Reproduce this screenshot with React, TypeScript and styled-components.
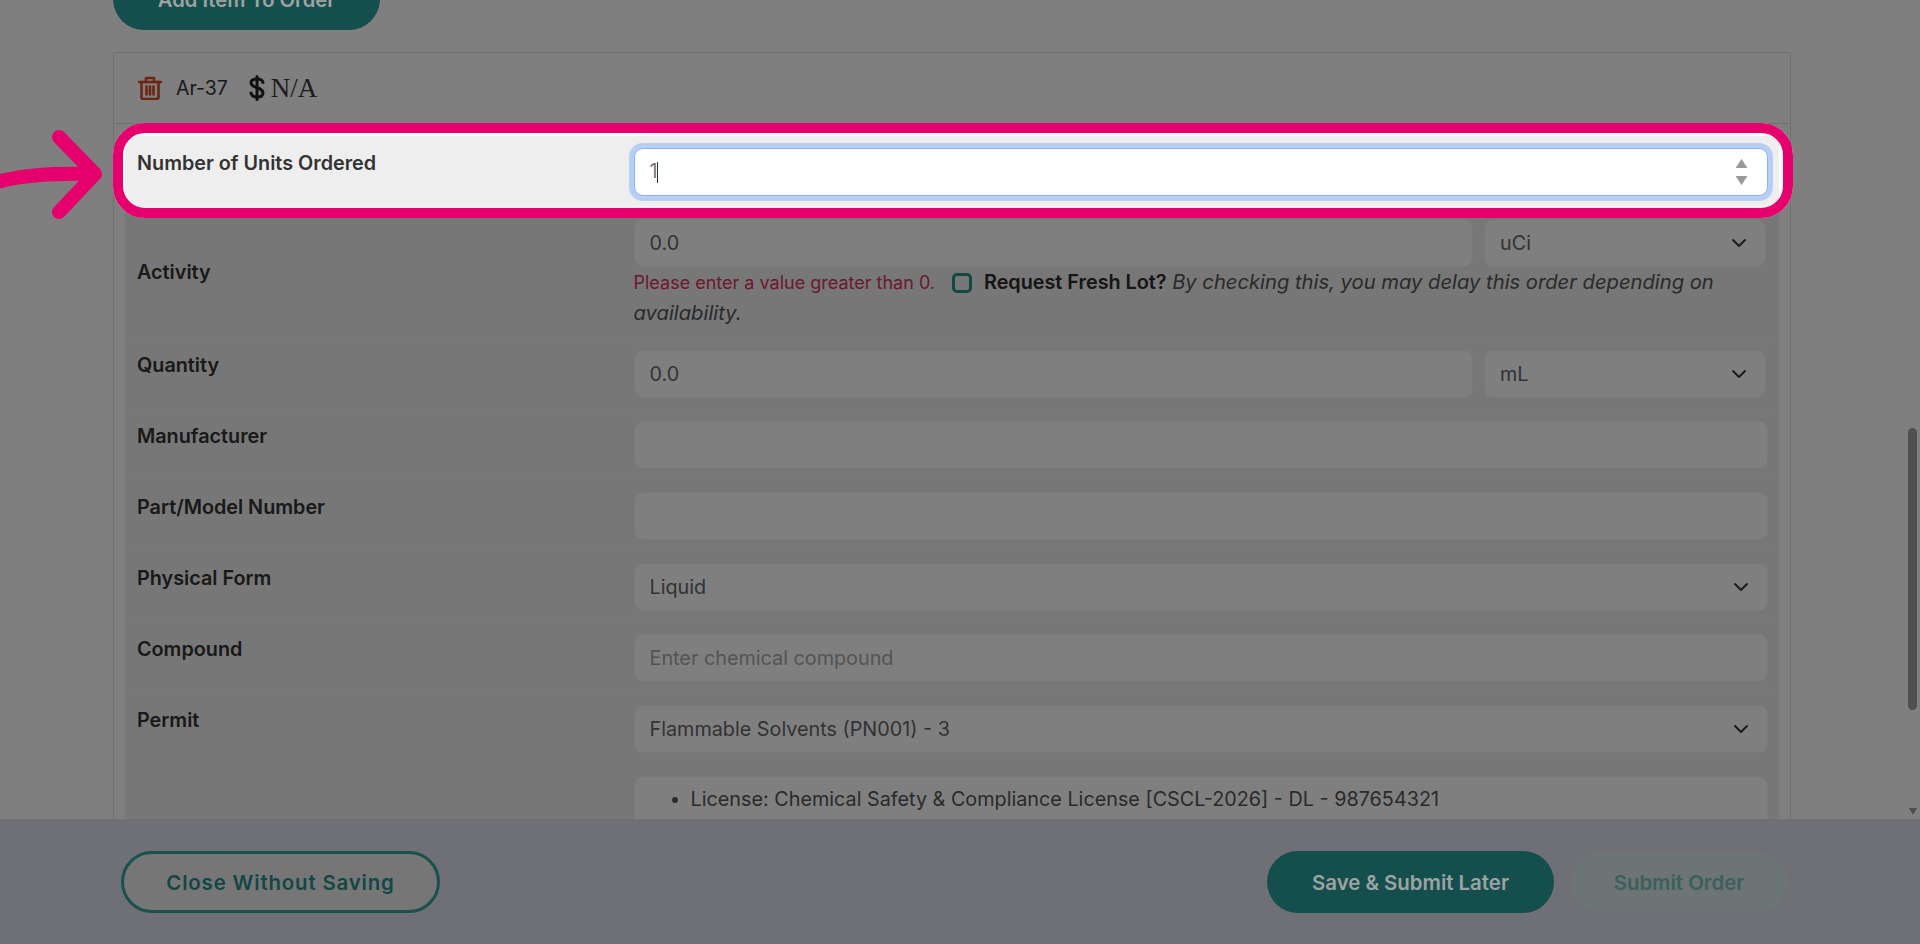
import React, { ReactNode } from 'react';
import styled, { createGlobalStyle } from 'styled-components';

const FONT = `Inter, "Noto Sans", sans-serif`;

const GlobalStyle = createGlobalStyle`
  html, body { margin: 0; padding: 0; background: #fff; }
  * { box-sizing: border-box; }
`;

const ChevronDown = () => (
  <svg width="16" height="16" viewBox="0 0 16 16" fill="none" stroke="#343a40" strokeWidth="2" strokeLinecap="round" strokeLinejoin="round">
    <path d="m2 5 6 6 6-6" />
  </svg>
);

const TrashIcon = () => (
  <svg width="24" height="24" viewBox="0 0 24 24" fill="none" stroke="#d84a22" strokeWidth="2.6" strokeLinejoin="round" strokeLinecap="round">
    <path d="M1 6h22" />
    <path d="M8 6V2h8v4" />
    <path d="M3.5 6v15a2 2 0 0 0 2 2h13a2 2 0 0 0 2-2V6" />
    <path d="M8.5 10.500v8M12 10.500v8M15.500 10.500v8" />
  </svg>
);

const DollarIcon = () => (
  <svg width="16" height="26" viewBox="0 0 16 26" fill="none" stroke="#202326" strokeWidth="3" strokeLinecap="round">
    <path d="M14 7.500C13.500 5 11 4 8 4 4.500 4 2 5.500 2 8c0 5.500 12 3.500 12 10 0 2.500-2.500 4-6 4-3.500 0-5.500-1.500-6-4" />
    <path d="M8 1.500v23" />
  </svg>
);

const SpinIcon = () => (
  <svg width="13" height="26" viewBox="0 0 13 26" fill="#9a9a9a">
    <path d="M6.500 0 12.500 9H.5z" />
    <path d="M.5 17h12l-6 9z" />
  </svg>
);

const ArrowIcon = () => (
  <svg width="112" height="100" viewBox="0 0 112 100" fill="none" stroke="#e5006e" strokeWidth="14" strokeLinecap="round" strokeLinejoin="round">
    <path d="M-6 60C20 52 50 50 92 51" />
    <path d="M59 14 95 51 59 89" />
  </svg>
);

const Row = ({ label, middle, children }: { label: string; middle?: boolean; children: ReactNode }) => (
  <RowWrap>
    <Label $middle={middle}>{label}</Label>
    <Cell>{children}</Cell>
  </RowWrap>
);

export default function App() {
  return (
    <Page>
      <GlobalStyle />
      <Main>
        <Content>
          <AddButton>Add Item To Order</AddButton>
          <Card>
            <CardHeader>
              <TrashIcon />
              <ItemName>Ar-37</ItemName>
              <Price>
                <DollarIcon />
                <PriceText>N/A</PriceText>
              </Price>
            </CardHeader>
            <Table>
              <Row label="Number of Units Ordered">
                <FocusField>
                  <Value>1</Value>
                  <Caret />
                  <Spin>
                    <SpinIcon />
                  </Spin>
                </FocusField>
              </Row>
              <Row label="Activity" middle>
                <Pair>
                  <Field>0.0</Field>
                  <Field>
                    uCi
                    <ChevronDown />
                  </Field>
                </Pair>
                <Helper>
                  <ErrorText>Please enter a value greater than 0.</ErrorText>
                  <CheckBox />
                  <strong>Request Fresh Lot?</strong>{' '}
                  <em>By checking this, you may delay this order depending on</em>
                  <br />
                  <em>availability.</em>
                </Helper>
              </Row>
              <Row label="Quantity">
                <Pair>
                  <Field>0.0</Field>
                  <Field>
                    mL
                    <ChevronDown />
                  </Field>
                </Pair>
              </Row>
              <Row label="Manufacturer">
                <Field />
              </Row>
              <Row label="Part/Model Number">
                <Field />
              </Row>
              <Row label="Physical Form">
                <Field>
                  Liquid
                  <ChevronDown />
                </Field>
              </Row>
              <Row label="Compound">
                <Field $placeholder>Enter chemical compound</Field>
              </Row>
              <Row label="Permit">
                <Field>
                  Flammable Solvents (PN001) - 3
                  <ChevronDown />
                </Field>
                <LicenseBox>
                  <ul>
                    <li>License: Chemical Safety &amp; Compliance License [CSCL-2026] - DL - 987654321</li>
                  </ul>
                </LicenseBox>
              </Row>
            </Table>
          </Card>
        </Content>
        <Scrollbar>
          <Thumb />
          <ScrollArrow />
        </Scrollbar>
      </Main>
      <Footer>
        <CloseButton>Close Without Saving</CloseButton>
        <FooterRight>
          <SaveButton>Save &amp; Submit Later</SaveButton>
          <SubmitButton>Submit Order</SubmitButton>
        </FooterRight>
      </Footer>
      <Highlight />
      <Arrow>
        <ArrowIcon />
      </Arrow>
    </Page>
  );
}

const Page = styled.div`
  position: relative;
  width: 1920px;
  height: 944px;
  overflow: hidden;
  display: flex;
  flex-direction: column;
  font-family: ${FONT};
  font-size: 19.8px;
  color: #333;
  background: #fff;
`;

const Main = styled.div`
  flex: 0 0 819px;
  display: flex;
  overflow: hidden;
`;

const Content = styled.div`
  flex: 1;
  padding: 0 114px 0 113px;
  margin-top: -32px;
`;

const AddButton = styled.div`
  position: relative;
  z-index: 2;
  width: 267px;
  height: 62px;
  border-radius: 31px;
  background: #154f4d;
  color: #9da3a2;
  font-weight: 600;
  font-size: 20.2px;
  display: flex;
  align-items: center;
  justify-content: center;
  margin-bottom: 22px;
`;

const Card = styled.div`
  border: 1px solid #e2e2e2;
  padding: 0 11px;
  background: #fff;
`;

const CardHeader = styled.div`
  height: 71px;
  padding: 0 24px;
  margin: 0 -11px 12px;
  display: flex;
  align-items: center;
  border-bottom: 1px solid #e2e2e2;
`;

const ItemName = styled.span`
  margin-left: 14px;
  font-size: 19.5px;
  color: #333;
`;

const Price = styled.span`
  display: flex;
  align-items: center;
  margin-left: 21px;
`;

const PriceText = styled.span`
  margin-left: 6px;
  font-family: "Liberation Serif", serif;
  font-size: 27px;
  color: #3a3a3a;
`;

const Table = styled.div`
  background: #eee;
`;

const RowWrap = styled.div`
  display: grid;
  grid-template-columns: 495.5px 1fr;
  border-bottom: 1px solid #f4f4f4;
`;

const Label = styled.div<{ $middle?: boolean }>`
  padding: ${p => (p.$middle ? '12px' : '14px')} 12px 12px;
  font-weight: 600;
  color: #333;
  line-height: 26px;
  align-self: ${p => (p.$middle ? 'center' : 'start')};
`;

const Cell = styled.div`
  padding: 12px 11px 10px 13px;
  min-width: 0;
`;

const Field = styled.div<{ $placeholder?: boolean }>`
  height: 48px;
  padding: 0 18px 0 15px;
  display: flex;
  align-items: center;
  justify-content: space-between;
  background: #fff;
  border: 1px solid #f4f4f4;
  border-radius: 9px;
  color: ${p => (p.$placeholder ? '#a8a8a8' : '#666')};
`;

const FocusField = styled(Field)`
  justify-content: flex-start;
  border-color: #86b7fe;
  box-shadow: 0 0 0 5px #b8cef3;
  color: #777;
  padding-right: 19px;
`;

const Value = styled.span`
  line-height: 1;
`;

const Caret = styled.span`
  width: 1px;
  height: 21px;
  margin-left: -1px;
  background: #333;
`;

const Spin = styled.span`
  margin-left: auto;
  display: flex;
`;

const Pair = styled.div`
  display: grid;
  grid-template-columns: 1fr 282px;
  gap: 11px;
  margin-right: 2px;
`;

const Helper = styled.div`
  height: 60px;
  line-height: 30px;
  color: #555;

  strong {
    font-weight: 600;
    color: #2a2a2a;
  }

  em {
    font-size: 20.2px;
  }
`;

const ErrorText = styled.span`
  color: #d8315b;
  font-size: 18px;
`;

const CheckBox = styled.span`
  display: inline-block;
  width: 20px;
  height: 20px;
  margin: 0 12px 0 17px;
  border: 3px solid #2a8f88;
  border-radius: 5px;
  vertical-align: -4px;
`;

const LicenseBox = styled.div`
  margin-top: 23px;
  height: 120px;
  background: #fff;
  border: 1px solid #f4f4f4;
  border-radius: 9px;
  color: #555;

  ul {
    margin: 0;
    padding: 10px 0 0 56px;
  }
`;

const Scrollbar = styled.div`
  flex: 0 0 15px;
  padding-top: 428px;
  display: flex;
  flex-direction: column;
  align-items: center;
`;

const Thumb = styled.div`
  width: 9px;
  height: 282px;
  border-radius: 5px;
  background: #9e9e9e;
`;

const ScrollArrow = styled.div`
  margin-top: auto;
  margin-bottom: 4px;
  width: 0;
  height: 0;
  border-left: 4px solid transparent;
  border-right: 4px solid transparent;
  border-top: 7px solid #9e9e9e;
`;

const Footer = styled.div`
  position: relative;
  z-index: 2;
  flex: 1;
  background: #6f7075;
  padding: 32px 133px 31px 121px;
  display: flex;
  justify-content: space-between;
  font-weight: 600;
  font-size: 20.4px;
`;

const FooterRight = styled.div`
  display: flex;
  gap: 17px;
  align-items: center;
`;

const CloseButton = styled.div`
  width: 319px;
  height: 62px;
  border: 3px solid #18514e;
  border-radius: 31px;
  background: #767676;
  color: #134744;
  letter-spacing: 0.85px;
  display: flex;
  align-items: center;
  justify-content: center;
`;

const SaveButton = styled.div`
  width: 287px;
  height: 62px;
  border-radius: 31px;
  background: #154f4d;
  color: #9da3a2;
  display: flex;
  align-items: center;
  justify-content: center;
`;

const SubmitButton = styled.div`
  width: 216px;
  height: 58px;
  border-radius: 29px;
  background: #6d7574;
  color: #3c605d;
  display: flex;
  align-items: center;
  justify-content: center;
`;

/* annotation over the page: dims everything outside the frame */
const Highlight = styled.div`
  position: absolute;
  z-index: 1;
  left: 113px;
  top: 123px;
  width: 1680px;
  height: 95px;
  border: 10px solid #e5006e;
  border-radius: 32px;
  box-shadow: 0 0 0 3000px rgba(0, 0, 0, 0.5);
  pointer-events: none;
`;

const Arrow = styled.div`
  position: absolute;
  z-index: 3;
  left: 0;
  top: 123px;
  display: flex;
`;
